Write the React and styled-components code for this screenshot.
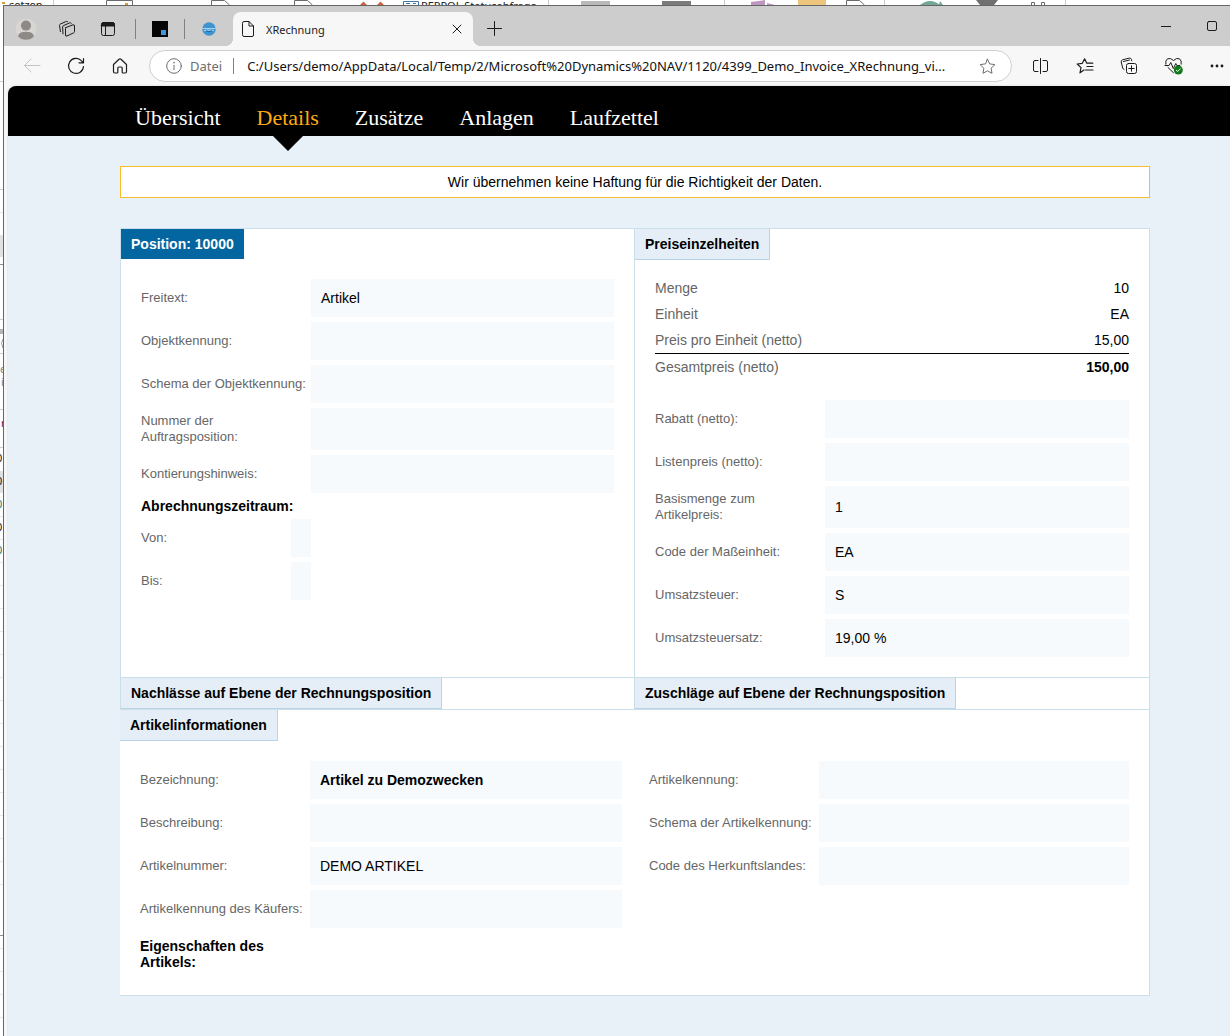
import React from 'react';
import styled, { createGlobalStyle } from 'styled-components';

const sans = "'Liberation Sans', Arial, sans-serif";
const serif = "'Liberation Serif', 'Times New Roman', serif";
const ui = "'Noto Sans', 'Segoe UI', sans-serif";

const GlobalStyle = createGlobalStyle`
  *, *::before, *::after { box-sizing: border-box; }
  body { margin: 0; background: #fff; font-family: ${sans}; overflow: hidden; }
  button { border: 0; padding: 0; background: none; font: inherit; color: inherit; }
  h1, h2, h3, dl, dd, p, ul { margin: 0; padding: 0; }
  svg { display: block; flex: none; }
`;

/* ---------- desktop and the program behind the browser ---------- */
const Desktop = styled.div`
  display: flex;
  flex-direction: column;
  height: 100vh;
  overflow: hidden;
`;
const RibbonEdge = styled.div`
  height: 5px;
  flex: none;
  overflow: hidden;
`;
const DesktopRow = styled.div`
  display: flex;
  flex: 1;
  min-height: 0;
`;
const ListEdge = styled.div`
  width: 3px;
  flex: none;
  overflow: hidden;
`;

/* ---------- browser ---------- */
const BrowserWindow = styled.div`
  flex: 1;
  min-width: 0;
  display: flex;
  flex-direction: column;
  border-top: 1px solid #666;
  border-left: 1px solid #666;
  background: #f7f7f7;
  color: #1b1b1b;
`;
const TabBar = styled.div`
  display: flex;
  align-items: center;
  height: 40px;
  flex: none;
  padding: 6px 0 0 1px;
  background: #cdcdcd;
  font-family: ${ui};
`;
const BarButton = styled.button`
  width: ${(p) => p.$width || 41}px;
  height: 32px;
  flex: none;
  display: flex;
  align-items: center;
  justify-content: center;
  color: ${(p) => p.$color || '#1b1b1b'};
`;
const Divider = styled.span`
  width: 1px;
  height: ${(p) => p.$height || 20}px;
  flex: none;
  margin-left: ${(p) => p.$space || 0}px;
  background: #808080;
`;
const ActiveTab = styled.div`
  position: relative;
  align-self: flex-end;
  display: flex;
  align-items: center;
  gap: 12px;
  width: 240px;
  height: 34px;
  padding: 0 8px 0 9px;
  border-radius: 8px 8px 0 0;
  background: #f7f7f7;
  font-size: 11px;
  &::before, &::after {
    content: '';
    position: absolute;
    bottom: 0;
    width: 8px;
    height: 8px;
  }
  &::before { right: 100%; background: radial-gradient(circle at 0 0, transparent 8px, #f7f7f7 8px); }
  &::after { left: 100%; background: radial-gradient(circle at 100% 0, transparent 8px, #f7f7f7 8px); }
`;
const TabTitle = styled.span`
  flex: 1;
`;
const WindowControls = styled.div`
  display: flex;
  margin-left: auto;
  margin-right: -5px;
  padding-bottom: 6px;
`;
const Toolbar = styled.div`
  display: flex;
  align-items: center;
  height: 40px;
  flex: none;
  padding-left: 6px;
  font-family: ${ui};
`;
const ToolGroup = styled.div`
  display: flex;
  flex: none;
  margin-right: ${(p) => p.$end || 0}px;
`;
const AddressBar = styled.div`
  flex: 1;
  min-width: 0;
  display: flex;
  align-items: center;
  height: 32px;
  margin: 0 7px;
  padding: 0 15px 0 16px;
  border: 1px solid #cfcfcf;
  border-radius: 16px;
  background: #fff;
  font-size: 13px;
`;
const Scheme = styled.label`
  margin: 0 11px 0 8px;
  color: #6e6e6e;
`;
const AddressInput = styled.input`
  flex: 1;
  min-width: 0;
  margin-left: 13px;
  padding: 0;
  border: 0;
  outline: 0;
  background: none;
  color: #111;
  font: inherit;
`;
const Viewport = styled.div`
  flex: 1;
  min-height: 0;
  margin-left: 4px;
  overflow: hidden;
  border-top-left-radius: 8px;
  background: #e9f1f8;
  box-shadow: 0 0 2px #c9c9c9;
`;

/* ---------- invoice page ---------- */
const Menu = styled.nav`
  display: flex;
  gap: 36px;
  height: 50px;
  padding: 0 80px 0 127px;
  background: #000;
  font: 22px/26px ${serif};
`;
const MenuLink = styled.a`
  position: relative;
  padding-top: 19px;
  color: ${(p) => (p.$active ? '#ffab10' : '#fff')};
  text-decoration: none;
  &::after {
    content: '';
    display: ${(p) => (p.$active ? 'block' : 'none')};
    position: absolute;
    top: 100%;
    left: 50%;
    margin-left: -15px;
    border: 15px solid transparent;
    border-top-color: #000;
    border-bottom: 0;
  }
`;
const Content = styled.main`
  padding: 30px 80px 40px 112px;
  color: #000;
  font: 14px/16px ${sans};
`;
const Notice = styled.p`
  margin-bottom: 30px;
  padding: 7px 10px;
  border: 1px solid #f8bd2c;
  background: #fff;
  text-align: center;
`;
const Sheet = styled.div`
  background: #fff;
  border-top: 1px solid #cbdfea;
`;
const BoxRow = styled.div`
  display: grid;
  grid-template-columns: minmax(0, 514fr) minmax(0, 515fr);
  border-bottom: 1px solid #cbdfea;
  border-right: 1px solid #cbdfea;
`;
const Box = styled.section`
  border-left: 1px solid #cbdfea;
`;
const WideBox = styled.section`
  border: solid #cbdfea;
  border-width: 0 1px 1px 0;
`;
const BoxTitle = styled.h2`
  width: fit-content;
  padding: 7px 10px;
  border: solid #b9d5e5;
  border-width: 0 1px 1px 0;
  background: #e5eef6;
  font-size: 14px;
  line-height: 16px;
`;
const PositionTitle = styled(BoxTitle)`
  border: 0;
  background: #0466a1;
  color: #fff;
`;
const BoxBody = styled.div`
  padding: ${(p) => p.$top || 20}px 20px 20px;
`;
const TwoColumns = styled(BoxBody)`
  display: grid;
  grid-template-columns: minmax(0, 482fr) minmax(0, 480fr);
  column-gap: 27px;
`;
const Fields = styled.dl`
  display: flex;
  flex-direction: column;
  gap: 5px;
`;
const FieldRow = styled.div`
  display: flex;
`;
const FieldName = styled.dt`
  width: ${(p) => (p.$short ? 150 : 170)}px;
  flex: none;
  align-self: center;
  padding: 5px 0;
  color: #666;
  font-size: 13px;
  white-space: pre-line;
`;
const FieldValue = styled.dd`
  flex: ${(p) => (p.$short ? '0 0 20px' : '1')};
  display: flex;
  align-items: center;
  min-height: 38px;
  padding: 0 10px;
  background: #f6fafd;
  font-weight: ${(p) => (p.$bold ? 700 : 400)};
`;
const SubTitle = styled.h3`
  margin: ${(p) => (p.$roomy ? '10px 0 5px' : '5px 0')};
  width: 160px;
  font-size: 14px;
  line-height: 16px;
`;
const PriceTable = styled.table`
  width: 100%;
  margin-bottom: 20px;
  border-collapse: separate;
  border-spacing: 0;
  th, td { padding: 5px 0; }
  th { color: #666; font-weight: 400; text-align: left; }
  td { text-align: right; }
`;
const TotalRow = styled.tr`
  th, td { border-top: 1px solid #000; }
  td { font-weight: 700; }
`;

/* ---------- icons ---------- */
const Icon = ({ size = 16, w, h, children, sw = 1 }) => (
  <svg width={w || size} height={h || size} viewBox={`0 0 ${w || size} ${h || size}`} fill="none"
    stroke="currentColor" strokeWidth={sw} strokeLinecap="round" strokeLinejoin="round" aria-hidden="true">
    {children}
  </svg>
);
const AvatarIcon = () => (
  <svg width="22" height="22" viewBox="0 0 22 22" aria-hidden="true">
    <circle cx="11" cy="11" r="10.5" fill="#d8d6d3" />
    <circle cx="11" cy="7.6" r="5" fill="#8d8985" />
    <path d="M3 18.2Q4 13.8 11 13.8T19 18.2Q16 21.8 11 21.8T3 18.2Z" fill="#8d8985" />
  </svg>
);
const WorkspacesIcon = () => (
  <Icon size={18}>
    <path d="M7.8 7.6 15 4.8Q16.5 4.5 16.5 6v5.6q0 .8-.8 1.2L9 16q-1.5.6-1.5-1V8.6q0-.8.3-1Z" />
    <path d="M5 13.8 4.6 7q0-1 .9-1.4l6.3-2.8q1-.3 1.6.6" />
    <path d="M2.4 11.6 1.5 5.4q0-1 .9-1.4l6-2.6q1-.3 1.5.5" />
  </Icon>
);
const TabActionsIcon = () => (
  <Icon size={16}>
    <rect x="1.5" y="1.5" width="13" height="13" rx="2" />
    <path d="M1.5 3.5a2 2 0 0 1 2-2h9a2 2 0 0 1 2 2V5h-13Z" fill="currentColor" />
    <path d="M5.5 5v9.5" />
  </Icon>
);
const NavAppIcon = () => (
  <svg width="16" height="16" viewBox="0 0 16 16" aria-hidden="true">
    <path d="M0 0h16v16H0z" fill="#050505" /><path d="M9 9h5v5H9z" fill="#3e97dc" />
  </svg>
);
const GlobeIcon = () => (
  <svg width="14" height="14" viewBox="0 0 14 14" aria-hidden="true">
    <circle cx="7" cy="7" r="6.7" fill="#3e94d1" />
    <path d="M.5 6.5h13M2 8.6l4-.6 6 .5" stroke="#a9d3ee" strokeWidth="1.2" fill="none" />
    <path d="M4 8.8q3 2 6 0" stroke="#1d679f" fill="none" />
  </svg>
);
const FileIcon = () => (
  <Icon w={12} h={16}><path d="M.5 2Q.5.5 2 .5h5l4.5 4.5V14q0 1.5-1.5 1.5H2Q.5 15.5.5 14ZM7 .5V5h4.5" /></Icon>
);
const CloseIcon = () => <Icon size={16}><path d="m4 4 8 8M12 4l-8 8" /></Icon>;
const PlusIcon = () => <Icon size={16}><path d="M8.5 .5v14M1.500 7.500h14" /></Icon>;
const MinimizeIcon = () => <Icon size={10}><path d="M0 5.5h10" /></Icon>;
const MaximizeIcon = () => <Icon size={10}><rect x=".5" y=".5" width="9" height="9" rx="1.5" /></Icon>;
const BackIcon = () => <Icon size={18}><path d="M17 8.5H1.5M8 2 1.5 8.5 8 15" /></Icon>;
const ReloadIcon = () => <Icon size={18} sw={1.2}><path d="M16.5 9.5a7.500 7.500 0 1 1-2-5.700L16.200 5.500M16.500 1.500v4.300H12" /></Icon>;
const HomeIcon = () => (
  <Icon size={16} sw={1.2}><path d="M1.5 6.5 7 1.3q1-.8 2 0l5.5 5.200v7.300q0 1.200-1.200 1.200H11q-.8 0-.8-.8V10q0-1-1-1H6.800q-1 0-1 1v4.200q0 .8-.8.8H2.700q-1.200 0-1.200-1.200Z" /></Icon>
);
const InfoIcon = () => (
  <Icon size={16}><circle cx="8" cy="8" r="7.3" /><path d="M8 7.3v4.4" /><path d="M8 4.6v.2" strokeWidth="1.5" /></Icon>
);
const StarIcon = () => (
  <Icon size={17}><path d="m8.5 1.2 2.200 4.700 5.200.7-3.800 3.600.9 5.100-4.500-2.500L4 15.300l.9-5.100L1.100 6.600l5.200-.7Z" /></Icon>
);
const SplitIcon = () => (
  <Icon size={16}><path d="M7.5.5v15M5 2.5H2Q.5 2.5.5 4v8q0 1.500 1.500 1.500h3M10 2.500h3q1.500 0 1.500 1.500v8q0 1.500-1.500 1.500h-3" /></Icon>
);
const FavoritesIcon = () => (
  <Icon w={18} h={16} sw={1.2}>
    <path d="M8 12 4 14.8l1-5.200L1.200 6l5.100-.7L8.600.8l2.200 4.400h6M11 8.500h6M9.500 12h7.500" />
  </Icon>
);
const CollectionsIcon = () => (
  <Icon size={18}>
    <rect x="6.5" y="6.5" width="10" height="10" rx="2" />
    <path d="M11.5 8.8v5.400M8.800 11.500h5.400M4 12.500q-1-.3-1.300-1.500L1.200 5Q1 3.300 2.500 2.800l6.800-1.700q1.600-.2 2.100 1.200l.3 1.500M3.500 4.500l6-1.500" />
  </Icon>
);
const EssentialsIcon = () => (
  <Icon w={20} h={18}>
    <path d="M2.800 7.200Q2 3.500 4.500 1.800 7.500.5 10.500 3.500q3-3 6-1.700 2.500 1.700 1.700 5.400M5 10.500l5.500 5.300M2 8.500h4l1.800-3 2.500 6 2.500-5 1 2h3" />
    <circle cx="15.300" cy="13" r="4.500" fill="#0f7b18" stroke="none" />
    <path d="m13.300 13.200 1.400 1.300 2.600-2.700" stroke="#fff" />
  </Icon>
);
const MoreIcon = () => (
  <Icon w={14} h={4}><g fill="currentColor" stroke="none"><circle cx="2" cy="2" r="1.4" /><circle cx="7" cy="2" r="1.4" /><circle cx="12" cy="2" r="1.4" /></g></Icon>
);

const RibbonDrawing = () => (
  <svg width="1230" height="5" viewBox="0 0 1230 5" fill="none" aria-hidden="true">
    <g stroke="#ccc"><path d="M53.5 0v5M548.5 0v5M724.5 0v5M884.5 0v5M1065.5 0v5" /></g>
    <g stroke="#6b6b6b"><path d="M106.5 5V.5h26V5M211.5 5V.5h13l5 4.500M294.500 5V.5h13l5 4.500M846.500 5V.5h13l5 4.500M1031.500 5V2.500h3V5M1041.500 5V2.500h3V5" /></g>
    <path d="M403.5 5V1.5h15V5M406 3.5h4M413 3.5h3" stroke="#3f76ab" />
    <path d="m360 5 3.5-3.5L367 5ZM377 5l3.500-3.500L384 5Z" fill="#d1603d" />
    <path d="M581 1h29v4h-29Z" fill="#b9b9b9" /><path d="M662 1h29v4h-29Z" fill="#7b7b7b" />
    <path d="M751 2 765 0v5h-14ZM767 3l8 2h-8Z" fill="#bd97bd" /><path d="M798 0h28v5h-28Z" fill="#ecc47c" />
    <path d="M920 5q10-8 20 0ZM940 1l3 4h-4Z" fill="#72a795" /><path d="M976 0h22l-4 5h-14Z" fill="#707070" />
    <path d="M2 3h3M125 4h3" stroke="#d99b35" strokeWidth="2" />
    <g fontFamily="Noto Sans, sans-serif" fontSize="11" fill="#222">
      <text x="9" y="9">setzen</text><text x="421" y="10">PEPPOL Statusabfrage</text>
    </g>
  </svg>
);
const rowLines = [516, 539, 562, 585, 608, 631, 654, 677, 700, 723, 746, 769, 792, 815, 838, 861, 884, 948, 971, 994, 1017];
const ListDrawing = () => (
  <svg width="3" height="1031" viewBox="0 5 3 1031" fill="none" aria-hidden="true">
    <path d="M0 235h3v22H0ZM0 471h3v22H0Z" fill="#e1e1e1" />
    <path d="M0 329h3v5H0Z" fill="#b5b5b5" />
    <path d="M0 81.5h3M0 189.5h3M0 319.5h3M0 353.5h3M0 409.5h3M0 447.5h3" stroke="#ccc" />
    <path d={['M0 212.5h3', ...rowLines.map((y) => `M0 ${y + 0.5}h3`)].join('')} stroke="#e8e8e8" />
    <path d="M0 264.5h3M0 935.5h3" stroke="#8f8f8f" />
    <path d="M3 339q-3 4 0 9" stroke="#999" />
    <g fontFamily="Noto Sans, sans-serif" fontSize="11">
      <g fill="#888"><text x="0" y="373">e</text><text x="1" y="386">i</text></g>
      <text x="1" y="427" fill="#7a1530">r</text>
      <g fill="#222"><text x="-4" y="462">0</text><text x="-4" y="485">0</text><text x="-4" y="531">0</text></g>
      <g fill="#14806d"><text x="-4" y="508">0</text><text x="-4" y="554">0</text></g>
    </g>
  </svg>
);

/* ---------- data ---------- */
const menu = ['Übersicht', 'Details', 'Zusätze', 'Anlagen', 'Laufzettel'];
const positionFields = [
  ['Freitext:', 'Artikel'], ['Objektkennung:', ''], ['Schema der Objektkennung:', ''],
  ['Nummer der\nAuftragsposition:', ''], ['Kontierungshinweis:', ''],
];
const periodFields = [['Von:', ''], ['Bis:', '']];
const priceFields = [
  ['Rabatt (netto):', ''], ['Listenpreis (netto):', ''], ['Basismenge zum\nArtikelpreis:', '1'],
  ['Code der Maßeinheit:', 'EA'], ['Umsatzsteuer:', 'S'], ['Umsatzsteuersatz:', '19,00 %'],
];
const articleFields = [
  ['Bezeichnung:', 'Artikel zu Demozwecken', true], ['Beschreibung:', ''],
  ['Artikelnummer:', 'DEMO ARTIKEL'], ['Artikelkennung des Käufers:', ''],
];
const articleCodes = [['Artikelkennung:', ''], ['Schema der Artikelkennung:', ''], ['Code des Herkunftslandes:', '']];

const FieldList = ({ items, short }) => (
  <Fields>
    {items.map(([name, value, bold]) => (
      <FieldRow key={name}>
        <FieldName $short={short}>{name}</FieldName>
        <FieldValue $short={short} $bold={bold}>{value}</FieldValue>
      </FieldRow>
    ))}
  </Fields>
);

export default function App() {
  return (
    <Desktop>
      <GlobalStyle />
      <RibbonEdge><RibbonDrawing /></RibbonEdge>
      <DesktopRow>
        <ListEdge><ListDrawing /></ListEdge>
        <BrowserWindow>
          <TabBar>
            <BarButton aria-label="Profil"><AvatarIcon /></BarButton>
            <BarButton aria-label="Arbeitsbereiche"><WorkspacesIcon /></BarButton>
            <BarButton aria-label="Tabaktionen"><TabActionsIcon /></BarButton>
            <Divider $space={7} />
            <BarButton $width={48} aria-label="Tab 1"><NavAppIcon /></BarButton>
            <Divider />
            <BarButton $width={48} aria-label="Tab 2"><GlobeIcon /></BarButton>
            <ActiveTab>
              <FileIcon />
              <TabTitle>XRechnung</TabTitle>
              <BarButton $width={16} aria-label="Tab schließen"><CloseIcon /></BarButton>
            </ActiveTab>
            <BarButton aria-label="Neuer Tab"><PlusIcon /></BarButton>
            <WindowControls>
              <BarButton $width={46} aria-label="Minimieren"><MinimizeIcon /></BarButton>
              <BarButton $width={46} aria-label="Maximieren"><MaximizeIcon /></BarButton>
            </WindowControls>
          </TabBar>
          <Toolbar>
            <ToolGroup>
              <BarButton $width={44} $color="#c4c4c4" aria-label="Zurück"><BackIcon /></BarButton>
              <BarButton $width={44} aria-label="Aktualisieren"><ReloadIcon /></BarButton>
              <BarButton $width={44} aria-label="Startseite"><HomeIcon /></BarButton>
            </ToolGroup>
            <AddressBar>
              <BarButton $width={16} $color="#6e6e6e" aria-label="Informationen"><InfoIcon /></BarButton>
              <Scheme htmlFor="address">Datei</Scheme>
              <Divider $height={16} />
              <AddressInput id="address" readOnly
                value="C:/Users/demo/AppData/Local/Temp/2/Microsoft%20Dynamics%20NAV/1120/4399_Demo_Invoice_XRechnung_vi..." />
              <BarButton $width={17} $color="#6e6e6e" aria-label="Favorit"><StarIcon /></BarButton>
            </AddressBar>
            <ToolGroup $end={-9}>
              <BarButton $width={44} aria-label="Geteilter Bildschirm"><SplitIcon /></BarButton>
              <BarButton $width={44} aria-label="Favoriten"><FavoritesIcon /></BarButton>
              <BarButton $width={44} aria-label="Sammlungen"><CollectionsIcon /></BarButton>
              <BarButton $width={44} aria-label="Browser-Essentials"><EssentialsIcon /></BarButton>
              <BarButton $width={44} aria-label="Mehr"><MoreIcon /></BarButton>
            </ToolGroup>
          </Toolbar>
          <Viewport>
            <Menu>
              {menu.map((m) => (
                <MenuLink key={m} href={`#${m}`} $active={m === 'Details'}>{m}</MenuLink>
              ))}
            </Menu>
            <Content>
              <Notice>Wir übernehmen keine Haftung für die Richtigkeit der Daten.</Notice>
              <Sheet>
                <BoxRow>
                  <Box>
                    <PositionTitle>Position: 10000</PositionTitle>
                    <BoxBody>
                      <FieldList items={positionFields} />
                      <SubTitle>Abrechnungszeitraum:</SubTitle>
                      <FieldList items={periodFields} short />
                    </BoxBody>
                  </Box>
                  <Box>
                    <BoxTitle>Preiseinzelheiten</BoxTitle>
                    <BoxBody $top={15}>
                      <PriceTable>
                        <tbody>
                          <tr><th scope="row">Menge</th><td>10</td></tr>
                          <tr><th scope="row">Einheit</th><td>EA</td></tr>
                          <tr><th scope="row">Preis pro Einheit (netto)</th><td>15,00</td></tr>
                          <TotalRow><th scope="row">Gesamtpreis (netto)</th><td>150,00</td></TotalRow>
                        </tbody>
                      </PriceTable>
                      <FieldList items={priceFields} />
                    </BoxBody>
                  </Box>
                </BoxRow>
                <BoxRow>
                  <Box><BoxTitle>Nachlässe auf Ebene der Rechnungsposition</BoxTitle></Box>
                  <Box><BoxTitle>Zuschläge auf Ebene der Rechnungsposition</BoxTitle></Box>
                </BoxRow>
                <WideBox>
                  <BoxTitle>Artikelinformationen</BoxTitle>
                  <TwoColumns>
                    <div>
                      <FieldList items={articleFields} />
                      <SubTitle $roomy>Eigenschaften des Artikels:</SubTitle>
                    </div>
                    <FieldList items={articleCodes} />
                  </TwoColumns>
                </WideBox>
              </Sheet>
            </Content>
          </Viewport>
        </BrowserWindow>
      </DesktopRow>
    </Desktop>
  );
}
